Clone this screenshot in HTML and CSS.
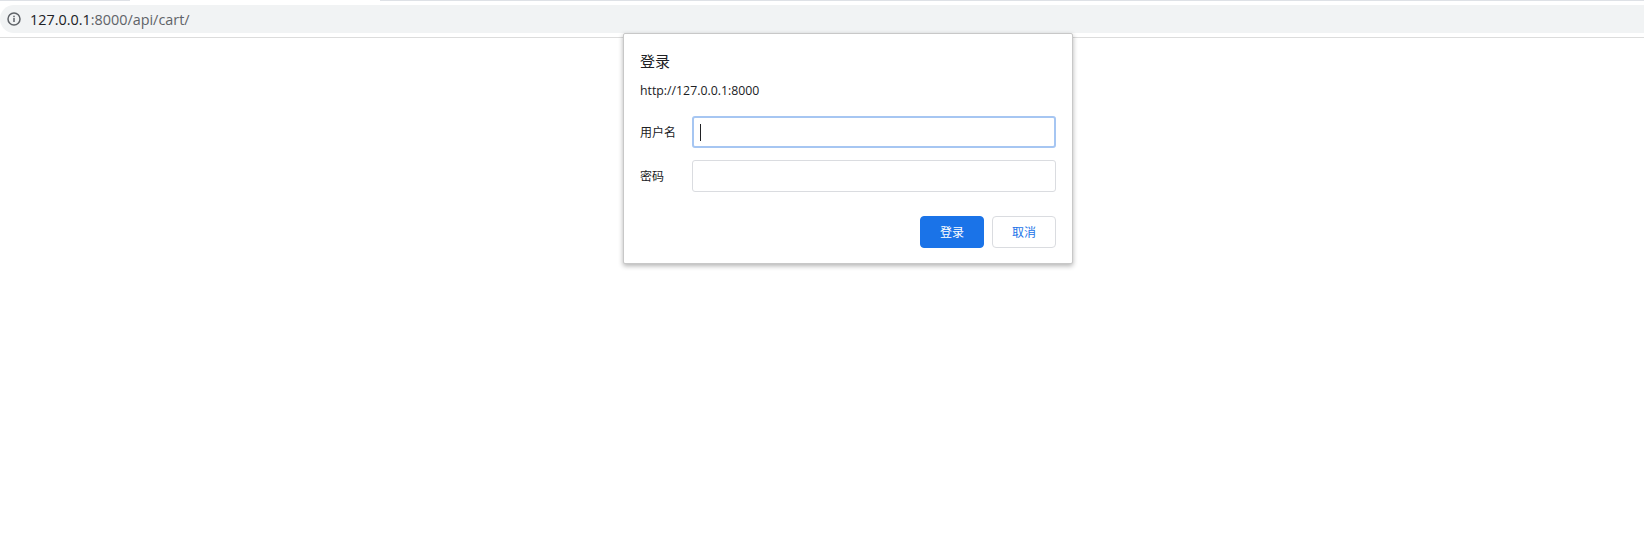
FILE: index.html
```html
<!DOCTYPE html>
<html lang="zh">
<head>
<meta charset="utf-8">
<title>登录</title>
<link rel="stylesheet" href="styles.css">
</head>
<body>
<header class="toolbar">
  <div class="tabline">
    <span class="tab-edge tab-edge-left"></span>
    <span class="tab-active"></span>
    <span class="tab-edge tab-edge-right"></span>
  </div>
  <div class="omnibox">
    <svg class="info-icon" width="16" height="16" viewBox="0 0 16 16" aria-hidden="true">
      <circle cx="8" cy="8" r="6" fill="none" stroke="#5f6368" stroke-width="1.5"/>
      <rect x="7.25" y="7" width="1.5" height="4" fill="#5f6368"/>
      <rect x="7.25" y="4.7" width="1.5" height="1.5" fill="#5f6368"/>
    </svg>
    <span class="url"><span class="url-host">127.0.0.1</span>:8000/api/cart/</span>
  </div>
</header>
<section class="dialog">
  <h1 class="dialog-title">登录</h1>
  <p class="dialog-origin">http://127.0.0.1:8000</p>
  <form class="fields">
    <div class="field">
      <label class="field-label">用户名</label>
      <div class="input input-focused"><span class="caret"></span></div>
    </div>
    <div class="field">
      <label class="field-label">密码</label>
      <div class="input"></div>
    </div>
    <div class="actions">
      <button type="button" class="btn btn-primary">登录</button>
      <button type="button" class="btn btn-secondary">取消</button>
    </div>
  </form>
</section>
</body>
</html>
```
FILE: styles.css
```css
* { box-sizing: border-box; }
html, body { margin: 0; height: 100%; background: #fff; }
body {
  position: relative;
  overflow: hidden;
  font-family: "Open Sans", "Noto Sans CJK SC", sans-serif;
  color: #202124;
}
.toolbar {
  height: 38px;
  border-bottom: 1px solid #dcdcdc;
}
.tabline { display: flex; height: 5px; }
.tab-edge { height: 1px; background: #dee1e6; }
.tab-edge-left { width: 130px; }
.tab-active { width: 250px; }
.tab-edge-right { flex: 1; }
.omnibox {
  height: 28px;
  display: flex;
  align-items: center;
  background: #f1f3f4;
  border-top-left-radius: 14px;
  border-bottom-left-radius: 14px;
  padding-left: 6px;
}
.info-icon { flex: none; }
.url {
  margin-left: 8px;
  font-size: 14.4px;
  color: #5f6368;
  white-space: nowrap;
}
.url-host { color: #202124; }
.dialog {
  position: absolute;
  left: 623px;
  top: 33px;
  width: 450px;
  height: 231px;
  padding: 16px;
  background: #fff;
  border: 1px solid #c8c8c8;
  border-radius: 2px;
  box-shadow: 0 2px 5px rgba(0, 0, 0, 0.3);
}
.dialog-title {
  margin: 0;
  font-size: 15px;
  line-height: 22px;
  font-weight: 400;
}
.dialog-origin {
  margin: 10px 0 0;
  font-size: 12.3px;
  line-height: 18px;
}
.fields { margin-top: 16px; display: flex; flex-direction: column; gap: 12px; }
.field { display: flex; align-items: center; }
.field-label { width: 52px; padding-top: 2px; font-size: 12px; line-height: 18px; }
.input {
  width: 364px;
  height: 32px;
  border: 1px solid #dadce0;
  border-radius: 3px;
  background: #fff;
  display: flex;
  align-items: center;
  padding-left: 7px;
}
.input-focused {
  border: 2px solid #a6c6f2;
  padding-left: 6px;
}
.caret { width: 1px; height: 17px; background: #202124; }
.actions { display: flex; justify-content: flex-end; gap: 8px; margin-top: 12px; }
.btn {
  width: 64px;
  height: 32px;
  padding: 0;
  border-radius: 4px;
  font: 12px "Open Sans", "Noto Sans CJK SC", sans-serif;
}
.btn-primary { background: #1a73e8; border: 1px solid #1a73e8; color: #fff; }
.btn-secondary { background: #fff; border: 1px solid #dadce0; color: #1a73e8; }
```
